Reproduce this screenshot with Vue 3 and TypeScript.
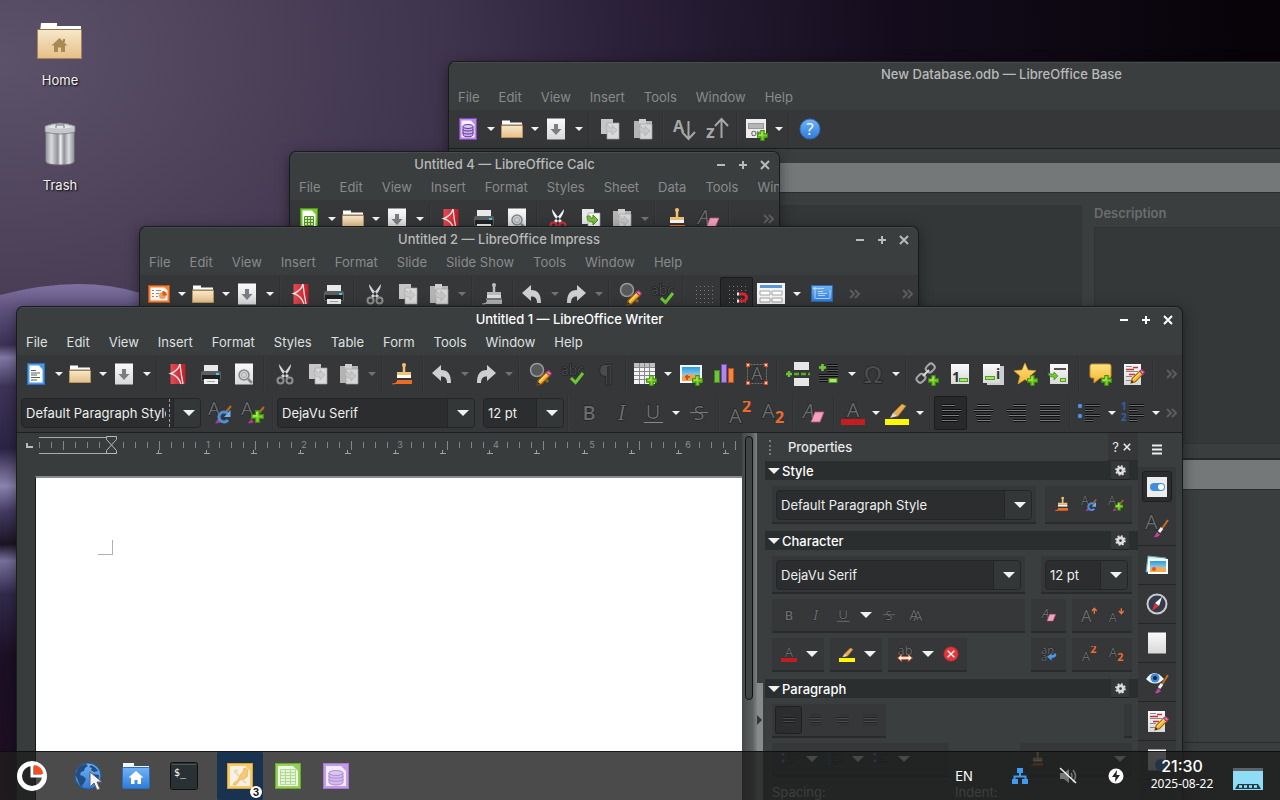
<script setup lang="ts">
interface Tool {
  kind: 'button' | 'menu' | 'sep' | 'more' | 'combo'
  icon: string
  off: boolean
  on: boolean
  size: string
}

interface AppWindow {
  id: string
  title: string
  menus: string[]
  tools: Tool[]
}

/* "|" separator, "*" drop-down, "~" disabled drop-down, "!" pressed, "@" combo box, ">" overflow */
function parse(spec: string): Tool[] {
  return spec.split(' ').map((token): Tool => {
    const last = token.slice(-1)
    const base = { off: false, on: false, size: '' }
    if (token === '|') return { ...base, kind: 'sep', icon: '' }
    if (token === '>') return { ...base, kind: 'more', icon: '' }
    if (token[0] === '@') return { ...base, kind: 'combo', icon: token.slice(1) }
    if (last === '*' || last === '~') {
      const icon = token.slice(0, -1)
      return { kind: 'menu', icon, off: last === '~', on: false, size: icon === 'display-views' ? 'wide' : '' }
    }
    if (last === '!') return { ...base, kind: 'button', icon: token.slice(0, -1), on: true }
    return { ...base, kind: 'button', icon: token }
  })
}

const windows: AppWindow[] = [
  {
    id: 'base',
    title: 'New Database.odb — LibreOffice Base',
    menus: ['File', 'Edit', 'View', 'Insert', 'Tools', 'Window', 'Help'],
    tools: parse('new-database* open* save* | copy paste | sort-ascending sort-descending | form* | help'),
  },
  {
    id: 'calc',
    title: 'Untitled 4 — LibreOffice Calc',
    menus: ['File', 'Edit', 'View', 'Insert', 'Format', 'Styles', 'Sheet', 'Data', 'Tools', 'Window'],
    tools: parse('new-spreadsheet* open* save* | export-pdf print preview | cut-red copy-green paste~ | clone clear | >'),
  },
  {
    id: 'impress',
    title: 'Untitled 2 — LibreOffice Impress',
    menus: ['File', 'Edit', 'View', 'Insert', 'Format', 'Slide', 'Slide Show', 'Tools', 'Window', 'Help'],
    tools: parse('new-slides* open* save* | export-pdf print | cut copy paste~ | clone-gray | undo~ redo~ | find spelling | grid snap! display-views* master-slide more >'),
  },
  {
    id: 'writer',
    title: 'Untitled 1 — LibreOffice Writer',
    menus: ['File', 'Edit', 'View', 'Insert', 'Format', 'Styles', 'Table', 'Form', 'Tools', 'Window', 'Help'],
    tools: parse('new-text* open* save* | export-pdf print preview | cut copy paste~ | clone | undo~ redo~ | find spelling pilcrow | table* image chart text-box | page-break field* omega* | link footnote endnote bookmark cross-reference | comment track | >'),
  },
]

const formatting = parse('@style style-update style-new | @font @points | bold italic underline* strike | superscript subscript | clear | font-color* highlight* | align-left! align-center align-right align-justify | bullets* numbering* >')

const combos: Record<string, string> = {
  style: 'Default Paragraph Style',
  font: 'DejaVu Serif',
  points: '12 pt',
}

const inch = 96
const origin = 74
const ticks = Array.from({ length: 60 }, (_, i) => i - 6)
  .filter((i) => i % 8 !== 0)
  .map((i) => ({ x: origin + i * 12, tall: i % 4 === 0 }))
const inches = Array.from({ length: 6 }, (_, i) => ({ n: i + 1, x: origin + (i + 1) * inch }))
const stops = Array.from({ length: 13 }, (_, i) => Math.round(origin + (i + 1) * 47.25))

const tabs = ['toggle', 'style-tab', 'gallery', 'compass', 'blank-page', 'eye', 'track', 'page-globe']
const launchers = ['globe', 'files', 'terminal']
const dots = Array.from({ length: 25 }, (_, i) => ({ x: 4 + (i % 5) * 4, y: 4 + Math.floor(i / 5) * 4 }))
</script>

<template>
  <div class="desktop">
    <svg class="paints" width="0" height="0" aria-hidden="true">
      <defs>
        <linearGradient id="g-folder" x1="0" y1="0" x2="0" y2="1"><stop offset="0" stop-color="#f6e8cc" /><stop offset="1" stop-color="#e6bf87" /></linearGradient>
        <linearGradient id="g-paper" x1="0" y1="0" x2="0" y2="1"><stop offset="0" stop-color="#fafafa" /><stop offset="1" stop-color="#d8d8d8" /></linearGradient>
        <linearGradient id="g-blue" x1="0" y1="0" x2="0" y2="1"><stop offset="0" stop-color="#71b3f5" /><stop offset="1" stop-color="#2f7bdb" /></linearGradient>
        <linearGradient id="g-red" x1="0" y1="0" x2="1" y2="0"><stop offset="0" stop-color="#e54c54" /><stop offset="1" stop-color="#bb1e2b" /></linearGradient>
        <linearGradient id="g-sky" x1="0" y1="0" x2="0" y2="1"><stop offset="0" stop-color="#2d9ce0" /><stop offset="1" stop-color="#c5ecf5" /></linearGradient>
        <linearGradient id="g-can" x1="0" y1="0" x2="1" y2="0"><stop offset="0" stop-color="#8c8e95" /><stop offset=".2" stop-color="#d9dade" /><stop offset=".42" stop-color="#8f9298" /><stop offset=".52" stop-color="#ededed" /><stop offset=".64" stop-color="#8d9097" /><stop offset=".8" stop-color="#dcdde0" /><stop offset="1" stop-color="#888b92" /></linearGradient>
        <linearGradient id="g-yellow" x1="0" y1="0" x2="0" y2="1"><stop offset="0" stop-color="#ffe383" /><stop offset="1" stop-color="#f3b52d" /></linearGradient>
      </defs>
    </svg>
    <svg class="sprite" aria-hidden="true">
      <symbol id="plus" viewBox="0 0 10 10"><path d="M3.5.5h3v3h3v3h-3v3h-3v-3h-3v-3h3z" fill="#7ed321" stroke="#3f8f10" /><path d="M4.500 1.500v3h-3" fill="none" stroke="#b8ee72" /></symbol>
      <symbol id="pencil" viewBox="0 0 14 14"><path d="M1 13l1-4 7-7 3 3-7 7z" fill="#f7b62c" stroke="#9a5e0a" /><path d="M3 10l7-7" stroke="#ffe07c" /><path d="M9 2l2-1.500 2.500 2.500L12 5z" fill="#f083b5" stroke="#a8386f" /><path d="M1 13l.8-2.500 1.700 1.700z" fill="#222" /></symbol>
      <symbol id="new-text" viewBox="0 0 24 24"><rect x="3.500" y="1.500" width="17" height="21" fill="#4c9bea" stroke="#2a6fc0" /><path d="M5.500 3.500h9.500l3.500 4v13h-13z" fill="#fff" /><path d="M7 8.500h5M7 11h9M7 13h6M7 15.500h9M7 18h6" stroke="#5a5f66" /></symbol>
      <symbol id="new-spreadsheet" viewBox="0 0 24 24"><rect x="3.500" y="1.500" width="17" height="21" fill="#7bcb2f" stroke="#4a951a" /><path d="M5.500 3.500h9.500l3.500 4v13h-13z" fill="#fff" /><path d="M7.500 9.500h9v9h-9zM7.500 12.500h9M7.500 15.500h9M10.500 9.500v9M13.500 9.500v9" fill="#d7f2b7" stroke="#56952a" /></symbol>
      <symbol id="new-database" viewBox="0 0 24 24"><rect x="3.500" y="1.500" width="17" height="21" fill="#b98be6" stroke="#7c4cb5" /><path d="M5.500 3.500h9.500l3.500 4v13h-13z" fill="#f6efff" /><path d="M7 9.500v8c0 3 10 3 10 0v-8" fill="#cdb2ec" stroke="#5d3494" /><path d="M7 12.500c0 2 10 2 10 0M7 15.500c0 2 10 2 10 0" fill="none" stroke="#5d3494" /><ellipse cx="12" cy="9.500" rx="5" ry="2" fill="#ddc9f4" stroke="#5d3494" /></symbol>
      <symbol id="new-slides" viewBox="0 0 24 24"><rect x="1.500" y="3.500" width="21" height="17" fill="#f28438" stroke="#c2541a" /><path d="M3.500 5.500h14l3 3v10h-17z" fill="#fff8f2" /><path d="M5 8.500h2M9 8.500h5M5 11.500h2M9 11.500h3M5 14.500h2M9 14.500h2" stroke="#8c8c8c" /><circle cx="15.500" cy="13.500" r="3.500" fill="#f2a06a" /><path d="M15.500 13.500v-4.500a4.500 4.500 0 0 1 4.500 4.500z" fill="#d85c1a" /></symbol>
      <symbol id="open" viewBox="0 0 24 24"><path d="M2 3.500h8v2h12v5H2z" fill="#fff" /><path d="M1.500 8.500h21v12h-21z" fill="url(#g-folder)" stroke="#b99561" /><path d="M1 8h22" stroke="#8b734f" /></symbol>
      <symbol id="save" viewBox="0 0 24 24"><rect x="3" y="1.500" width="18" height="21" fill="url(#g-paper)" /><path d="M10 7h4v5h3.500L12 18l-5.500-6H10z" fill="#7b7e82" /></symbol>
      <symbol id="export-pdf" viewBox="0 0 24 24"><rect x="4.500" y="2" width="15" height="20" fill="url(#g-red)" /><path d="M14 2Q12 9 4.500 11.500Q12 13.500 15 22M14 2Q15 12 17 22" fill="none" stroke="#fbe3e3" stroke-width="1.300" /></symbol>
      <symbol id="print" viewBox="0 0 24 24"><path d="M5 3h14v7H5z" fill="#e9e9e9" /><rect x="2" y="9" width="20" height="10" rx="2" fill="#5b5f62" /><path d="M3 13h18v5H3z" fill="#222" /><rect x="17" y="11" width="3" height="2" fill="#35d0e6" /><path d="M5 17h14v5H5z" fill="#f1f1f1" /><path d="M8 19.500h8" stroke="#a9a9a9" /></symbol>
      <symbol id="preview" viewBox="0 0 24 24"><rect x="3" y="1.500" width="18" height="21" fill="url(#g-paper)" /><circle cx="12" cy="13" r="5" fill="#cfd3d6" stroke="#83878b" stroke-width="1.500" /><circle cx="12" cy="13" r="2.500" fill="none" stroke="#a7abae" /><path d="M16 17l4 4" stroke="#83878b" stroke-width="2.500" /></symbol>
      <symbol id="cut" viewBox="0 0 24 24"><path d="M6 2c0 5 3 9 8 14l2-2C11 9 9 6 6 2zM18 2c0 5-3 9-8 14l-2-2c5-5 7-8 10-12z" fill="#d6d6d6" /><circle cx="7.500" cy="18.500" r="3" fill="none" stroke="#8e8e8e" stroke-width="2" /><circle cx="16.500" cy="18.500" r="3" fill="none" stroke="#8e8e8e" stroke-width="2" /></symbol>
      <symbol id="cut-red" viewBox="0 0 24 24"><path d="M6 2c0 5 3 9 8 14l2-2C11 9 9 6 6 2zM18 2c0 5-3 9-8 14l-2-2c5-5 7-8 10-12z" fill="#f4f4f4" /><circle cx="7.500" cy="18.500" r="3" fill="none" stroke="#d5303a" stroke-width="2" /><circle cx="16.500" cy="18.500" r="3" fill="none" stroke="#d5303a" stroke-width="2" /></symbol>
      <symbol id="copy" viewBox="0 0 24 24"><path d="M3 2h12v15H3z" fill="#c6c6c6" /><path d="M9 6h12v16H9z" fill="#dadada" stroke="#a2a2a2" stroke-width=".7" /><path d="M8 9c0 5 2 6 6 6v3l5-5-5-5v3c-2 0-3 0-3-2z" fill="#cbcbcb" stroke="#b0b0b0" stroke-width=".7" /></symbol>
      <symbol id="copy-green" viewBox="0 0 24 24"><path d="M3 2h12v15H3z" fill="#e9e9e9" /><path d="M9 6h12v16H9z" fill="#f6f6f6" stroke="#a2a2a2" stroke-width=".7" /><path d="M8 9c0 5 2 6 6 6v3l5-5-5-5v3c-2 0-3 0-3-2z" fill="#7cc53c" stroke="#4b8e1d" /></symbol>
      <symbol id="paste" viewBox="0 0 24 24"><path d="M3 4h18v17H3z" fill="#b4b4b4" /><path d="M8 2h7v5H8z" fill="#cecece" /><path d="M9 7h12v15H9z" fill="#d5d5d5" stroke="#a5a5a5" stroke-width=".7" /><path d="M8 10c0 5 2 6 6 6v3l5-5-5-5v3c-2 0-3 0-3-2z" fill="#c6c6c6" stroke="#adadad" stroke-width=".7" /></symbol>
      <symbol id="clone" viewBox="0 0 24 24"><path d="M13 3v8" stroke="#f1c271" stroke-width="2.500" /><circle cx="13" cy="3" r="2" fill="#f1c271" /><path d="M6 10h14v3H6z" fill="#f1c271" /><path d="M6 13h14v3H6z" fill="#fff" /><path d="M5 16h16v2.500H5z" fill="#363636" /><path d="M6 18h15v4H5q-4 1-4-.5 5 0 5-3.500z" fill="#ed6b24" /></symbol>
      <symbol id="clone-gray" viewBox="0 0 24 24"><path d="M13 3v8" stroke="#bdbdbd" stroke-width="2.500" /><circle cx="13" cy="3" r="2" fill="#bdbdbd" /><path d="M6 10h14v3H6z" fill="#b9b9b9" /><path d="M6 13h14v3H6z" fill="#ddd" /><path d="M5 16h16v2.500H5z" fill="#777" /><path d="M6 18h15v4H5q-4 1-4-.5 5 0 5-3.500z" fill="#b0b0b0" /></symbol>
      <symbol id="undo" viewBox="0 0 24 24"><path d="M2 11l9-8v5c7 0 10 4 10 13h-4c0-5-2-6.500-6-6.500V19z" fill="#cfcfcf" /></symbol>
      <symbol id="redo" viewBox="0 0 24 24"><path d="M22 11l-9-8v5C6 8 3 12 3 21h4c0-5 2-6.500 6-6.500V19z" fill="#cfcfcf" /></symbol>
      <symbol id="find" viewBox="0 0 24 24"><circle cx="9" cy="8" r="6.500" fill="#57595b" stroke="#969a9c" stroke-width="1.500" /><path d="M14 13l6 7" stroke="#80603e" stroke-width="3" /><use href="#pencil" x="8" y="8" width="16" height="16" /></symbol>
      <symbol id="spelling" viewBox="0 0 24 24"><text class="glyph dark" x="0" y="13" font-size="14">abc</text><path d="M10 16l4.500 4.500L22 11" fill="none" stroke="#6bc832" stroke-width="3" /></symbol>
      <symbol id="pilcrow" viewBox="0 0 24 24"><text class="glyph dark" x="12" y="19" text-anchor="middle" font-size="22">¶</text></symbol>
      <symbol id="table" viewBox="0 0 24 24"><rect x="1" y="1" width="21" height="21" fill="#f3f3f3" /><path d="M1 1h21v4H1z" fill="#c0c0c0" /><path d="M1 5.500h21M1 9.500h21M1 13.500h21M1 17.500h21M6.500 1v21M11.500 1v21M16.500 1v21" stroke="#888" /><use href="#plus" x="13" y="13" width="11" height="11" /></symbol>
      <symbol id="image" viewBox="0 0 24 24"><rect x="1" y="3" width="22" height="18" fill="#f7f7f7" /><rect x="3" y="5" width="18" height="14" fill="url(#g-sky)" /><path d="M3 14q8-4 18 0v5H3z" fill="#e8a457" /><path d="M8 13v5M6 15h5" stroke="#d6501f" stroke-width="2" /><use href="#plus" x="13" y="13" width="11" height="11" /></symbol>
      <symbol id="chart" viewBox="0 0 24 24"><rect x="2.500" y="8.500" width="5" height="12" fill="#72c236" stroke="#3c8a16" /><rect x="9.500" y="2.500" width="5" height="18" fill="#b285ee" stroke="#7549b5" /><rect x="16.500" y="6.500" width="5" height="14" fill="#f58443" stroke="#bd4c14" /></symbol>
      <symbol id="text-box" viewBox="0 0 24 24"><rect x="2.500" y="2.500" width="19" height="19" fill="none" stroke="#707273" stroke-dasharray="2 1" /><text class="glyph" x="12" y="18" text-anchor="middle" font-size="18">A</text><path d="M1 1h4v4H1zM19 1h4v4h-4zM1 19h4v4H1zM19 19h4v4h-4z" fill="#dd4c22" /><path d="M2 2h2v2H2zM20 2h2v2h-2zM2 20h2v2H2zM20 20h2v2h-2z" fill="#ffd0b5" /></symbol>
      <symbol id="page-break" viewBox="0 0 24 24"><path d="M8 0h15v8H8zM8 16h15v8H8z" fill="#e6e6e6" /><path d="M8 12h16" stroke="#5daa26" stroke-width="2.500" stroke-dasharray="5 2" /><path d="M0 12h6M3 9v6" stroke="#6cc22d" stroke-width="2.500" /></symbol>
      <symbol id="field" viewBox="0 0 24 24"><path d="M10 3.500h11M10 8.500h11M2 13.500h19M2 18.500h9" stroke="#0e0f0f" stroke-width="3" /><path d="M10 3.500h11M10 8.500h11M2 13.500h19M2 18.500h9" stroke="#5e6061" /><rect x="12" y="16.500" width="8" height="4" fill="#a9ec69" stroke="#509a1c" /><path d="M2 5.500h7M5.500 2v7" stroke="#75cb35" stroke-width="2.500" /></symbol>
      <symbol id="omega" viewBox="0 0 24 24"><text class="glyph dark" x="12" y="21" text-anchor="middle" font-size="24" font-weight="600">Ω</text></symbol>
      <symbol id="link" viewBox="0 0 24 24"><g fill="none" stroke="#a6a8a9" stroke-width="2"><rect x="12" y="2" width="7" height="9" rx="3" transform="rotate(45 16 6)" /><rect x="2" y="12" width="7" height="9" rx="3" transform="rotate(45 6 17)" /><path d="M8 14l6-6" stroke="#d9d9d9" /></g><use href="#plus" x="13" y="13" width="11" height="11" /></symbol>
      <symbol id="footnote" viewBox="0 0 24 24"><rect x="3" y="2" width="18" height="20" fill="url(#g-paper)" /><text x="4" y="20" font-family="Open Sans, sans-serif" font-weight="700" font-size="14" fill="#303233">1</text><rect x="11.500" y="16.500" width="8" height="3" fill="#a4e66a" stroke="#579b28" /></symbol>
      <symbol id="endnote" viewBox="0 0 24 24"><rect x="6" y="4" width="17" height="19" fill="#cdcdcd" /><rect x="2" y="2" width="17" height="19" fill="url(#g-paper)" /><rect x="4.500" y="14.500" width="9" height="3" fill="#a4e66a" stroke="#579b28" /><text x="15" y="17" font-family="Open Sans, sans-serif" font-weight="700" font-size="14" fill="#303233">i</text></symbol>
      <symbol id="bookmark" viewBox="0 0 24 24"><path d="M11 1l3 7 8 .8-6 5.200 2 8-7-4.500L4 22l2-8L0 8.800 8 8z" fill="url(#g-yellow)" stroke="#d89b28" stroke-width=".7" /><use href="#plus" x="13" y="13" width="11" height="11" /></symbol>
      <symbol id="cross-reference" viewBox="0 0 24 24"><rect x="3" y="2" width="18" height="20" fill="url(#g-paper)" /><path d="M7 7h12" stroke="#5d4e4b" stroke-width="2" /><path d="M1 11c1 4 3 4 6 4v3l4-4-4-4v2H4z" fill="#74c634" stroke="#408b16" stroke-width=".7" /><rect x="13.500" y="16.500" width="5" height="3" fill="#a4e66a" stroke="#579b28" /></symbol>
      <symbol id="comment" viewBox="0 0 24 24"><path d="M4 2h17q2 0 2 2v10q0 2-2 2h-9l-6 5v-5H4q-2 0-2-2V4q0-2 2-2z" fill="url(#g-yellow)" stroke="#c78f22" /><use href="#plus" x="13" y="13" width="11" height="11" /></symbol>
      <symbol id="track" viewBox="0 0 24 24"><rect x="3" y="2" width="17" height="21" fill="url(#g-paper)" /><path d="M5 4.500h6M5 9.500h12M5 14.500h6M5 18.500h5" stroke="#888" /><path d="M12 5.500h5M5 7.500h8M8 12.500h6" stroke="#cf3037" stroke-width="1.500" /><use href="#pencil" x="9" y="7" width="15" height="15" /></symbol>
      <symbol id="style-update" viewBox="0 0 24 24"><text class="glyph" x="0" y="14" font-size="19">A</text><path d="M18 11l5-6" stroke="#bf6a1e" stroke-width="2" /><path d="M7 22l3-4 3 3q-3 2-6 1z" fill="#b8329d" /><path d="M19.500 12.500A5 5 0 1 0 20 19" fill="none" stroke="#4b8fdc" stroke-width="3" /><path d="M22.500 9v7H16z" fill="#70b0f3" /></symbol>
      <symbol id="style-new" viewBox="0 0 24 24"><text class="glyph" x="0" y="14" font-size="19">A</text><path d="M18 12l5-6" stroke="#bf6a1e" stroke-width="2" /><path d="M7 22l3-4 3 3q-3 2-6 1z" fill="#b8329d" /><use href="#plus" x="10" y="9" width="13" height="13" /></symbol>
      <symbol id="bold" viewBox="0 0 24 24"><text class="glyph" x="12" y="19" text-anchor="middle" font-size="20" font-weight="600">B</text></symbol>
      <symbol id="italic" viewBox="0 0 24 24"><text class="glyph slab" x="12" y="19" text-anchor="middle" font-size="20" font-style="italic">I</text></symbol>
      <symbol id="underline" viewBox="0 0 24 24"><text class="glyph" x="12" y="18" text-anchor="middle" font-size="20">U</text><path d="M3 21.500h19" stroke="#85878a" /></symbol>
      <symbol id="strike" viewBox="0 0 24 24"><text class="glyph" x="12" y="19" text-anchor="middle" font-size="20">S</text><path d="M3 11.500h18" stroke="#77797a" /></symbol>
      <symbol id="superscript" viewBox="0 0 24 24"><text class="glyph" x="1" y="22" font-size="20">A</text><text x="14" y="11" font-family="Open Sans, sans-serif" font-weight="700" font-size="16" fill="#ed6c2b">2</text></symbol>
      <symbol id="subscript" viewBox="0 0 24 24"><text class="glyph" x="1" y="17" font-size="20">A</text><text x="14" y="22" font-family="Open Sans, sans-serif" font-weight="700" font-size="16" fill="#ed6c2b">2</text></symbol>
      <symbol id="clear" viewBox="0 0 24 24"><text class="glyph" x="1" y="17" font-size="20" font-style="italic">A</text><path d="M13 11h9l-4 10H9z" fill="#f3a0b9" stroke="#b6577b" stroke-width=".8" /></symbol>
      <symbol id="font-color" viewBox="0 0 24 24"><text class="glyph" x="12" y="16" text-anchor="middle" font-size="20">A</text><path d="M0 18h24v6H0z" fill="#c41c1f" /></symbol>
      <symbol id="highlight" viewBox="0 0 24 24"><path d="M8 12l9-9 4 2-8 10-5 1z" fill="#e8b04e" stroke="#a9721f" stroke-width=".7" /><path d="M5 17l3-5 4 3z" fill="#dadada" /><path d="M0 18h24v6H0z" fill="#fdf800" /></symbol>
      <symbol id="align-left" viewBox="0 0 24 24"><path d="M3 4.500h13M3 9.500h19M3 14.500h17M3 19.500h15" stroke="#0c0d0d" stroke-width="3" /><path d="M3 4.500h13M3 9.500h19M3 14.500h17M3 19.500h15" stroke="#7a7c7d" /></symbol>
      <symbol id="align-center" viewBox="0 0 24 24"><path d="M5 4.500h13M2 9.500h19M4 14.500h15M5 19.500h14" stroke="#101111" stroke-width="3" /><path d="M5 4.500h13M2 9.500h19M4 14.500h15M5 19.500h14" stroke="#7a7c7d" /></symbol>
      <symbol id="align-right" viewBox="0 0 24 24"><path d="M8 4.500h13M2 9.500h19M4 14.500h17M8 19.500h13" stroke="#101111" stroke-width="3" /><path d="M8 4.500h13M2 9.500h19M4 14.500h17M8 19.500h13" stroke="#7a7c7d" /></symbol>
      <symbol id="align-justify" viewBox="0 0 24 24"><path d="M2 4.500h20M2 9.500h20M2 14.500h20M2 19.500h20" stroke="#101111" stroke-width="3" /><path d="M2 4.500h20M2 9.500h20M2 14.500h20M2 19.500h20" stroke="#7a7c7d" /></symbol>
      <symbol id="bullets" viewBox="0 0 24 24"><path d="M8 4.500h15M8 9.500h8M8 14.500h15M8 19.500h8" stroke="#101111" stroke-width="3" /><path d="M8 4.500h15M8 9.500h8M8 14.500h15M8 19.500h8" stroke="#6c6e6f" /><circle cx="3" cy="5" r="2.200" fill="#4f90e4" /><circle cx="3" cy="15" r="2.200" fill="#4f90e4" /></symbol>
      <symbol id="numbering" viewBox="0 0 24 24"><path d="M8 4.500h15M8 9.500h8M8 14.500h15M8 19.500h8" stroke="#101111" stroke-width="3" /><path d="M8 4.500h15M8 9.500h8M8 14.500h15M8 19.500h8" stroke="#6c6e6f" /><text x="0" y="9" font-family="Open Sans, sans-serif" font-weight="700" font-size="10" fill="#345fa6">1</text><text x="0" y="20" font-family="Open Sans, sans-serif" font-weight="700" font-size="10" fill="#345fa6">2</text></symbol>
      <symbol id="grid" viewBox="0 0 24 24"><rect v-for="(d, i) in dots" :key="i" :x="d.x" :y="d.y" width="1" height="1" fill="#77797a" /></symbol>
      <symbol id="snap" viewBox="0 0 24 24"><rect v-for="(d, i) in dots" :key="i" :x="d.x" :y="d.y" width="1" height="1" fill="#77797a" /><path d="M14 12h4a3.500 3.500 0 0 1 0 7h-4" fill="none" stroke="#d8252e" stroke-width="3" /><path d="M13 10.500v3M13 17.500v3" stroke="#eee" stroke-width="2" /></symbol>
      <symbol id="display-views" viewBox="0 0 30 24"><rect x="1" y="1" width="28" height="21" fill="#f4f4f4" /><path d="M4 4.500h22" stroke="#5c95d8" stroke-width="3" /><path d="M4 9h10v4H4zM16 9h10v4H16zM4 16h10v4H4zM16 16h10v4H16z" fill="#fff" stroke="#a2a2a2" /></symbol>
      <symbol id="master-slide" viewBox="0 0 24 24"><rect x="1.500" y="3.500" width="21" height="16" fill="url(#g-blue)" stroke="#2a68b5" /><path d="M5 5v12M3 6.500h11M20 16v-8M6 16.500h14M8 9.500h5M8 11.500h9M8 13.500h7" stroke="#cde6ff" stroke-width=".8" fill="none" /></symbol>
      <symbol id="sort-ascending" viewBox="0 0 24 24"><text x="1" y="15" font-family="Open Sans, sans-serif" font-weight="700" font-size="16" fill="#a5a7a8">A</text><path d="M16.500 4v17M10 15l6.500 7 6.500-7" fill="none" stroke="#a5a7a8" stroke-width="2" /></symbol>
      <symbol id="sort-descending" viewBox="0 0 24 24"><text x="1" y="21" font-family="Open Sans, sans-serif" font-weight="700" font-size="18" fill="#a5a7a8">z</text><path d="M16.500 21V3M10 9l6.500-7L23 9" fill="none" stroke="#a5a7a8" stroke-width="2" /></symbol>
      <symbol id="form" viewBox="0 0 24 24"><rect x="2" y="2" width="20" height="19" fill="#ededed" /><rect x="4.500" y="6.500" width="15" height="5" fill="#b5b5b5" stroke="#999" /><text x="7" y="19" font-family="DejaVu Sans, sans-serif" font-size="7" fill="#333">OK</text><use href="#plus" x="13" y="13" width="11" height="11" /></symbol>
      <symbol id="help" viewBox="0 0 24 24"><circle cx="12" cy="12" r="10" fill="url(#g-blue)" stroke="#2e6fc6" /><text x="12" y="18" text-anchor="middle" font-family="Open Sans, sans-serif" font-size="17" fill="#fff">?</text></symbol>
      <symbol id="more" viewBox="0 0 24 24"><path d="M7 8l4 4-4 4M12 8l4 4-4 4" fill="none" stroke="#5b5d5e" stroke-width="2" /></symbol>
      <symbol id="shadow" viewBox="0 0 24 24"><text class="glyph" x="8" y="21" font-size="22">A</text><text class="glyph" x="2" y="19" font-size="22">A</text></symbol>
      <symbol id="grow" viewBox="0 0 24 24"><text class="glyph" x="0" y="22" font-size="25">A</text><path d="M20 10V2M16.500 6L20 2l3.500 4" fill="none" stroke="#f07340" stroke-width="2" /></symbol>
      <symbol id="shrink" viewBox="0 0 24 24"><text class="glyph" x="1" y="22" font-size="19">A</text><path d="M20 2v8M16.500 6l3.500 4 3.500-4" fill="none" stroke="#f07340" stroke-width="2" /></symbol>
      <symbol id="spacing" viewBox="0 0 24 24"><text class="glyph" x="12" y="14" text-anchor="middle" font-size="19">ab</text><path d="M1 18l6-5v3h10v-3l6 5-6 5v-3H7v3z" fill="#fff" stroke="#e45d25" stroke-width="1.500" /></symbol>
      <symbol id="reset" viewBox="0 0 24 24"><circle cx="12" cy="12" r="11" fill="#e0383f" stroke="#ac1c26" /><path d="M7 7l10 10M17 7L7 17" stroke="#fff" stroke-width="2" /></symbol>
      <symbol id="text-wrap" viewBox="0 0 24 24"><text class="glyph" x="0" y="12" font-size="17">an</text><text class="glyph" x="0" y="23" font-size="17">a</text><path d="M23 12q0 6-7 6v4l-7-6 7-5v3q3 0 5-3z" fill="#4c96ea" /></symbol>
      <symbol id="gear" viewBox="0 0 16 16"><circle cx="8" cy="8" r="4" fill="none" stroke="#dedede" stroke-width="4" /><circle cx="8" cy="8" r="6.500" fill="none" stroke="#dedede" stroke-width="2.500" stroke-dasharray="2.600 2.500" /></symbol>
      <symbol id="toggle" viewBox="0 0 24 24"><rect x="2" y="2" width="20" height="20" fill="#ededed" /><rect x="5" y="8" width="15" height="8" rx="4" fill="#3d8edb" /><circle cx="16" cy="12" r="3" fill="#fff" /></symbol>
      <symbol id="style-tab" viewBox="0 0 24 24"><text class="glyph" x="0" y="15" font-size="20">A</text><path d="M16 16l7-10" stroke="#cc6b21" stroke-width="2" /><path d="M14 18l3-4" stroke="#f0f0f0" stroke-width="3" /><path d="M9 23l3-5 3 3q-3 3-6 2z" fill="#c9409b" /></symbol>
      <symbol id="gallery" viewBox="0 0 24 24"><path d="M3 3l18 2v14H1z" fill="#d9f0f8" stroke="#5a9cab" /><rect x="3" y="6" width="20" height="15" fill="#fff" /><rect x="5" y="8" width="16" height="11" fill="url(#g-sky)" /><path d="M5 15q8-3 16 0v4H5z" fill="#efac52" /><circle cx="9" cy="16" r="2" fill="#e2551f" /></symbol>
      <symbol id="compass" viewBox="0 0 24 24"><circle cx="12" cy="12" r="9.500" fill="#343b4c" stroke="#c9cbcc" stroke-width="2" /><path d="M17 5l-3 9-4-3z" fill="#fff" /><path d="M7 19l3-8 4 3z" fill="#dd3338" /></symbol>
      <symbol id="blank-page" viewBox="0 0 24 24"><rect x="3" y="1.500" width="18" height="21" fill="url(#g-paper)" /></symbol>
      <symbol id="eye" viewBox="0 0 24 24"><path d="M1 9q8-12 18 0-9 9-18 0z" fill="#f3f6f8" /><circle cx="10" cy="8" r="4.500" fill="#3b8ad8" /><circle cx="10" cy="8" r="2" fill="#10233a" /><path d="M16 16l7-11" stroke="#cc6b21" stroke-width="2" /><path d="M14 18l3-4" stroke="#f0f0f0" stroke-width="3" /><path d="M10 23l3-5 3 3q-3 3-6 2z" fill="#c9409b" /></symbol>
      <symbol id="page-globe" viewBox="0 0 24 24"><rect x="3" y="1.500" width="18" height="21" fill="url(#g-paper)" /><circle cx="16" cy="17" r="6" fill="#3c87d8" /></symbol>
      <symbol id="home-folder" viewBox="0 0 48 40"><path d="M5 2h16v3h24v6H4z" fill="#fff" /><path d="M1.500 8.500h44v29h-44z" fill="url(#g-folder)" stroke="#a88450" /><path d="M1 8.500h45" stroke="#8e734b" /><path d="M23.500 17l8 7.500h-2.500V31h-4v-4.500h-3V31h-4v-6.500h-2.500z" fill="#a98a55" /><path d="M27 18h2v3h-2z" fill="#a98a55" /></symbol>
      <symbol id="trash-can" viewBox="0 0 32 44"><path d="M1.500 8v31q0 4 14.500 4t14.500-4V8z" fill="url(#g-can)" stroke="#676971" /><path d="M1 4q15-6 30 0v6q-15 4-30 0z" fill="#c5c7ca" stroke="#75777c" stroke-width=".8" /><path d="M3 5q13-5 26 0-13 3-26 0z" fill="#e6e7e9" /><path d="M12 6V3h8v3" fill="none" stroke="#77797c" /></symbol>
      <symbol id="globe" viewBox="0 0 30 30"><circle cx="15" cy="15" r="13" fill="url(#g-blue)" stroke="#225ba5" /><path d="M5 7q4-4 8-4l2 2-3 2-1 3-3 1-1 3 3 1 3 3-2 4-2 3-1 1-2-4-2-5-2-3zM18 4q5 2 7 6l-4 1-3-2 1-2-3-1zM20 13l6 1q0 5-3 8l-3-3-2-3z" fill="#234f80" /></symbol>
      <symbol id="files" viewBox="0 0 30 30"><path d="M2 2h11v3h15v5H2z" fill="#f4f7fa" /><rect x="1.500" y="6.500" width="27" height="21" rx="1" fill="url(#g-blue)" stroke="#2d6cbd" /><path d="M15 10l7.500 6.500h-2.500V23h-3.500v-4h-3v4H10v-6.500H7.500z" fill="#fff" /></symbol>
      <symbol id="terminal" viewBox="0 0 30 30"><rect x="1.500" y="1.500" width="27" height="27" rx="2" fill="#293134" stroke="#101314" /><path d="M3 3.500h24" stroke="#4f5759" /><text x="5" y="15" font-family="DejaVu Sans Mono, monospace" font-size="10" fill="#fff">$_</text></symbol>
      <symbol id="launcher" viewBox="0 0 32 32"><circle cx="16" cy="16" r="12.500" fill="none" stroke="#fff" stroke-width="5" /><path d="M16 2v14h14" fill="none" stroke="#fff" stroke-width="3" /><path d="M18 5a9 9 0 0 1 9 9h-9z" fill="#fa4b1e" /></symbol>
      <symbol id="draw-app" viewBox="0 0 30 30"><rect x="2.500" y="2.500" width="25" height="25" fill="#f5cb62" stroke="#d3a23a" /><path d="M5 5h15l5 5v15H5z" fill="#f8f0e2" /><path d="M9 10l12 12M10 9l3 1" fill="none" stroke="#ecd3a0" stroke-width="1.500" /><path d="M19 7q4 0 4 4l-1 5q-2 2-5 2l-2 1-4 5-3 0q0-3 4-4l3-5q1-3 3-4z" fill="#f6ca72" stroke="#e2b35c" stroke-width=".7" /></symbol>
      <symbol id="calc-app" viewBox="0 0 30 30"><rect x="2.500" y="2.500" width="25" height="25" fill="#92d153" stroke="#68a92f" /><path d="M5 5h15l5 5v15H5z" fill="#f0f5ea" /><path d="M7.500 8.500h15v15h-15zM7.500 11.500h15M7.500 14.500h15M7.500 17.500h15M7.500 20.500h15M12.500 8.500v15M17.500 8.500v15" fill="#e6f3d8" stroke="#b3d892" /></symbol>
      <symbol id="base-app" viewBox="0 0 30 30"><rect x="2.500" y="2.500" width="25" height="25" fill="#c29cea" stroke="#a47bd0" /><path d="M5 5h15l5 5v15H5z" fill="#f0ebf6" /><path d="M8 12v9c0 4 14 4 14 0v-9" fill="#d3bbee" stroke="#b08bd9" /><path d="M8 15c0 3 14 3 14 0M8 18c0 3 14 3 14 0" fill="none" stroke="#b08bd9" /><ellipse cx="15" cy="12" rx="7" ry="2.500" fill="#dcc5f5" stroke="#b08bd9" /></symbol>
      <symbol id="network" viewBox="0 0 18 18"><path d="M6 1h6v5H6zM1 12h6v5H1zM11 12h6v5h-6z" fill="#3f9cf1" /><path d="M9 6v3.500M3.500 12V9.500h11V12" stroke="#3f9cf1" stroke-width="2" fill="none" /></symbol>
      <symbol id="muted" viewBox="0 0 18 18"><path d="M1 6h4l5-4v14l-5-4H1z" fill="#767676" /><path d="M12 6q2 3 0 6M14 3q5 6 0 12" fill="none" stroke="#767676" stroke-width="1.500" /><path d="M1 1l16 15" stroke="#f2f2f2" stroke-width="1.500" /></symbol>
      <symbol id="power" viewBox="0 0 18 18"><circle cx="9" cy="9" r="7.500" fill="#fff" /><path d="M10 3L5 10h3.500L8 15l5-7H9.500z" fill="#222" /></symbol>
      <symbol id="show-desktop" viewBox="0 0 30 24"><path d="M0 1h30v3H0z" fill="#5d6468" /><path d="M0 4h30v19H0z" fill="#8fdcf6" /><path d="M2 22l3-5h20l3 5z" fill="#223f49" /><path d="M6 19.500h18" stroke="#9ce3f8" stroke-width="2.500" stroke-dasharray="3 2" /></symbol>
    </svg>

    <svg class="wallpaper" viewBox="0 0 1280 800" preserveAspectRatio="none" aria-hidden="true">
      <defs>
        <linearGradient id="w-wave" gradientUnits="userSpaceOnUse" x1="0" y1="285" x2="0" y2="345"><stop offset="0" stop-color="#7d709f" /><stop offset=".4" stop-color="#5e527d" /><stop offset="1" stop-color="#3a3154" /></linearGradient>
        <linearGradient id="w-fold" gradientUnits="userSpaceOnUse" x1="0" y1="345" x2="5" y2="760">
          <stop offset="0" stop-color="#3a3154" /><stop offset=".03" stop-color="#8279a5" /><stop offset=".1" stop-color="#3d3458" /><stop offset=".25" stop-color="#2c2444" />
          <stop offset=".34" stop-color="#8b84b0" /><stop offset=".4" stop-color="#453d63" /><stop offset=".48" stop-color="#1b1424" /><stop offset=".52" stop-color="#77709b" />
          <stop offset=".6" stop-color="#332b4c" /><stop offset=".75" stop-color="#1c1026" /><stop offset="1" stop-color="#1f0e22" />
        </linearGradient>
      </defs>
      <path d="M0 295Q80 274 140 293L300 320V350H0z" fill="url(#w-wave)" />
      <path d="M0 345h20v455H0z" fill="url(#w-fold)" />
    </svg>

    <nav class="shortcuts" aria-label="Desktop">
      <a class="shortcut" href="#home"><svg class="pic home"><use href="#home-folder" /></svg>Home</a>
      <a class="shortcut" href="#trash"><svg class="pic can"><use href="#trash-can" /></svg>Trash</a>
    </nav>

    <section v-for="w in windows" :key="w.id" class="window" :class="w.id" :aria-label="w.title">
      <header class="titlebar">
        <h2 class="title">{{ w.title }}</h2>
        <button class="control" aria-label="Minimize"><svg viewBox="0 0 10 10"><path d="M1 5h8" /></svg></button>
        <button class="control" aria-label="Maximize"><svg viewBox="0 0 10 10"><path d="M1 5h8M5 1v8" /></svg></button>
        <button class="control" aria-label="Close"><svg viewBox="0 0 10 10"><path d="M1 1l8 8M9 1L1 9" /></svg></button>
      </header>
      <nav class="menubar"><button v-for="m in w.menus" :key="m">{{ m }}</button></nav>

      <div class="bars">
        <div v-for="(bar, b) in w.id === 'writer' ? [w.tools, formatting] : [w.tools]" :key="b" class="toolbar" :class="{ second: b === 1 }">
          <template v-for="(t, i) in bar" :key="i">
            <span v-if="t.kind === 'sep'" class="sep"></span>
            <button v-else-if="t.kind === 'more'" class="tool overflow" aria-label="More"><svg><use href="#more" /></svg></button>
            <span v-else-if="t.kind === 'combo'" class="combo" :class="t.icon">
              <input type="text" :value="combos[t.icon]" :aria-label="t.icon" />
              <button :aria-label="t.icon + ' list'"><i class="arrow big"></i></button>
            </span>
            <button v-else-if="t.kind === 'button'" class="tool" :class="{ on: t.on }" :aria-label="t.icon"><svg><use :href="'#' + t.icon" /></svg></button>
            <button v-else class="tool split" :class="[t.size, { off: t.off }]" :aria-label="t.icon"><svg><use :href="'#' + t.icon" /></svg><i class="arrow"></i></button>
          </template>
        </div>
      </div>

      <div v-if="w.id === 'base'" class="base-body">
        <div class="band"></div>
        <div class="panes">
          <div class="tasks"></div>
          <div class="description"><h3>Description</h3><div class="description-box"></div></div>
        </div>
        <div class="band"></div>
        <div class="objects"></div>
      </div>

      <div v-if="w.id === 'writer'" class="writer-body">
        <div class="editor">
          <div class="ruler">
            <span class="corner"></span>
            <svg class="scale" height="24" aria-hidden="true">
              <path d="M1 4.500h68M1 20.500h68" stroke="#a9abab" fill="none" />
              <path v-for="t in ticks" :key="t.x" :d="t.tall ? `M${t.x - .5} 8v9` : `M${t.x - .5} 9v6`" stroke="#858787" />
              <text v-for="n in inches" :key="n.n" :x="n.x" y="15" text-anchor="middle">{{ n.n }}</text>
              <path v-for="s in stops" :key="'s' + s" :d="`M${s - 3} 20.500h6M${s - .5} 17v4`" stroke="#a0a2a2" />
              <path d="M68.500 3.500h10v3l-10 11v3h10v-3l-10-11z" fill="#3b3e3f" stroke="#b7b9b9" />
            </svg>
          </div>
          <div class="paper" role="textbox" aria-label="Document"><span class="margin-mark"></span></div>
        </div>
        <div class="scrollbar"><div class="thumb"></div></div>
        <div class="sash"><span class="sash-grip"></span></div>
        <aside class="deck">
          <header class="deck-head">
            <span class="grip"></span>
            <h3>Properties</h3>
            <div class="deck-buttons">
              <button aria-label="Help">?</button>
              <button aria-label="Close sidebar"><svg class="x" viewBox="0 0 10 10"><path d="M1 1l8 8M9 1L1 9" /></svg></button>
            </div>
          </header>
          <h4 class="section"><i class="arrow big"></i>Style<button aria-label="Style options"><svg><use href="#gear" /></svg></button></h4>
          <div class="rows">
            <div class="row">
              <div class="box grow field"><span class="combo"><input type="text" value="Default Paragraph Style" aria-label="Paragraph style" /><button aria-label="Styles"><i class="arrow big"></i></button></span></div>
              <div class="box tall gap-wide icons"><button v-for="n in ['clone', 'style-update', 'style-new']" :key="n" :aria-label="n"><svg><use :href="'#' + n" /></svg></button></div>
            </div>
          </div>
          <h4 class="section"><i class="arrow big"></i>Character<button aria-label="Character options"><svg><use href="#gear" /></svg></button></h4>
          <div class="rows">
            <div class="row">
              <div class="box grow field"><span class="combo"><input type="text" value="DejaVu Serif" aria-label="Font name" /><button aria-label="Fonts"><i class="arrow big"></i></button></span></div>
              <div class="box gap-size sized field"><span class="combo"><input type="text" value="12 pt" aria-label="Font size" /><button aria-label="Sizes"><i class="arrow big"></i></button></span></div>
            </div>
            <div class="row">
              <div class="box grow icons">
                <button v-for="n in ['bold', 'italic', 'underline']" :key="n" :aria-label="n"><svg><use :href="'#' + n" /></svg></button>
                <button class="narrow" aria-label="Underline styles"><i class="arrow big"></i></button>
                <button v-for="n in ['strike', 'shadow']" :key="n" :aria-label="n"><svg><use :href="'#' + n" /></svg></button>
              </div>
              <div class="box gap icons single"><button aria-label="Clear formatting"><svg><use href="#clear" /></svg></button></div>
              <div class="box gap icons"><button v-for="n in ['grow', 'shrink']" :key="n" :aria-label="n"><svg><use :href="'#' + n" /></svg></button></div>
            </div>
            <div class="row">
              <div class="box icons"><button aria-label="Font color"><svg><use href="#font-color" /></svg></button><button class="narrow" aria-label="Colors"><i class="arrow big"></i></button></div>
              <div class="box gap icons"><button aria-label="Highlight"><svg><use href="#highlight" /></svg></button><button class="narrow" aria-label="Highlights"><i class="arrow big"></i></button></div>
              <div class="box gap icons"><button aria-label="Spacing"><svg><use href="#spacing" /></svg></button><button class="narrow" aria-label="Spacings"><i class="arrow big"></i></button><button aria-label="Reset"><svg><use href="#reset" /></svg></button></div>
              <span class="fill"></span>
              <div class="box gap icons single"><button aria-label="Text wrap"><svg><use href="#text-wrap" /></svg></button></div>
              <div class="box gap icons"><button v-for="n in ['superscript', 'subscript']" :key="n" :aria-label="n"><svg><use :href="'#' + n" /></svg></button></div>
            </div>
          </div>
          <h4 class="section"><i class="arrow big"></i>Paragraph<button aria-label="Paragraph options"><svg><use href="#gear" /></svg></button></h4>
          <div class="rows">
            <div class="row">
              <div class="box icons"><button v-for="(n, i) in ['align-left', 'align-center', 'align-right', 'align-justify']" :key="n" :class="{ on: i === 0 }" :aria-label="n"><svg><use :href="'#' + n" /></svg></button></div>
              <span class="fill"></span>
              <div class="box sliver"></div>
            </div>
            <div class="row">
              <div class="box icons lists">
                <template v-for="(n, i) in ['bullets', 'numbering', 'bullets']" :key="i"><button :aria-label="n"><svg><use :href="'#' + n" /></svg></button><button class="narrow" aria-label="Options"><i class="arrow big"></i></button></template>
              </div>
              <span class="fill"></span>
              <div class="box icons fills"><button aria-label="Background"><svg><use href="#clone" /></svg></button><button class="narrow" aria-label="Backgrounds"><i class="arrow big"></i></button></div>
            </div>
            <div class="labels"><span>Spacing:</span><span>Indent:</span></div>
          </div>
        </aside>
        <nav class="tabs" aria-label="Sidebar">
          <button class="tab menu" aria-label="Sidebar settings"><svg viewBox="0 0 12 12"><path d="M1 1.500h10M1 5.500h10M1 9.500h10" stroke="#eee" stroke-width="2" /></svg></button>
          <button v-for="(n, i) in tabs" :key="n" class="tab" :class="{ on: i === 0 }" :aria-label="n"><svg><use :href="'#' + n" /></svg></button>
        </nav>
      </div>
    </section>

    <footer class="panel">
      <button class="start" aria-label="Menu"><svg class="launch"><use href="#launcher" /></svg></button>
      <button v-for="n in launchers" :key="n" class="app" :aria-label="n">
        <svg><use :href="'#' + n" /></svg>
        <svg v-if="n === 'globe'" class="cursor" viewBox="0 0 14 20"><path d="M1 1v15l4-4 3 7 3-1-3-7h5z" fill="#f4f4f4" stroke="#5b6066" /></svg>
      </button>
      <button class="app active" aria-label="LibreOffice"><svg><use href="#draw-app" /></svg><span class="badge">3</span></button>
      <button class="app" aria-label="Calc"><svg><use href="#calc-app" /></svg></button>
      <button class="app" aria-label="Base"><svg><use href="#base-app" /></svg></button>
      <span class="fill"></span>
      <button class="lang">EN</button>
      <button v-for="n in ['network', 'muted', 'power']" :key="n" class="tray" :aria-label="n"><svg><use :href="'#' + n" /></svg></button>
      <time class="clock" datetime="2025-08-22T21:30"><b>21:30</b><span>2025-08-22</span></time>
      <button class="peek" aria-label="Show desktop"><svg><use href="#show-desktop" /></svg></button>
    </footer>
  </div>
</template>

<style>
body {
  margin: 0;
  overflow: hidden;
  background: #170f20;
}
</style>

<style scoped>
.desktop {
  position: relative;
  height: 100vh;
  overflow: hidden;
  font: 13px/20px Inter, "Liberation Sans", sans-serif;
  color: #e8e9e9;
  background: radial-gradient(ellipse 1250px 1000px at 0 60px, #5c526a 0, #4c4159 20%, #3f344d 36%, #2b2039 50%, #140c1c 72%, #070309 100%);
}
.desktop * { box-sizing: border-box; }
.paints, .wallpaper { position: absolute; }
.sprite { display: none; }
.glyph {
  font-family: "Open Sans", sans-serif;
  fill: #6a6c6d;
  stroke: #17191a;
  stroke-width: 1px;
  paint-order: stroke;
}
.glyph.dark { fill: #4a4c4d; }
.glyph.slab { font-family: "DejaVu Serif", serif; }
.wallpaper { inset: 0; width: 100%; height: 100%; }
button {
  display: flex;
  align-items: center;
  justify-content: center;
  padding: 0;
  border: 0;
  background: none;
  color: inherit;
  font: inherit;
}
h2, h3, h4 { margin: 0; font-size: 13px; font-weight: 500; }
svg { flex: none; }

.shortcuts { position: absolute; top: 21px; left: 20px; width: 80px; }
.shortcut {
  display: flex;
  flex-direction: column;
  align-items: center;
  height: 105px;
  color: #f2f2f2;
  text-decoration: none;
  text-shadow: 1px 1px 2px #000;
}
.pic { display: block; }
.home { width: 48px; height: 40px; margin-bottom: 9px; }
.can { width: 32px; height: 44px; margin: -4px 0 9px; }

.window {
  position: absolute;
  bottom: 0;
  display: flex;
  flex-direction: column;
  overflow: hidden;
  border-radius: 6px 6px 0 0;
  background: #3b3e3f;
  box-shadow: 0 0 0 1px #191b1c, 0 3px 14px rgba(0, 0, 0, .5);
}
.base { left: 449px; top: 62px; width: 1165px; }
.calc { left: 290px; top: 152px; width: 489px; }
.impress { left: 140px; top: 227px; width: 778px; }
.writer { left: 17px; top: 307px; width: 1165px; }
.titlebar { display: flex; flex: none; height: 24px; padding: 0 3px 0 9px; border-top: 1px solid #484b4c; color: #b9bab9; }
.writer .titlebar { color: #fff; }
.title { flex: 1; text-align: center; line-height: 23px; }
.control { width: 22px; }
.control svg, .x { width: 10px; height: 10px; fill: none; stroke: currentColor; stroke-width: 2; }
.menubar { display: flex; flex: none; height: 24px; padding-bottom: 2px; white-space: nowrap; overflow: hidden; color: #898b8b; }
.writer .menubar { color: #dfe0e0; }
.menubar button { flex: none; padding: 0 10px 0 9px; line-height: 20px; }

.bars { flex: none; background: #353738; border-bottom: 1px solid #1d1f20; }
.toolbar { display: flex; align-items: center; height: 38px; padding-left: 4px; }
.toolbar.second { height: 39px; }
.tool { flex: none; width: 33px; height: 34px; }
.tool svg { width: 24px; height: 24px; }
.tool.on { border: 1px solid #1a1c1d; border-radius: 2px; background: #282a2b; }
.split { width: 44px; justify-content: flex-start; padding-left: 3px; }
.split .arrow { margin-left: 7px; }
.wide { width: 52px; }
.tool.wide svg { width: 30px; }
.sep { flex: none; width: 2px; height: 34px; margin: 0 3px; border-left: 1px solid #2f3132; border-right: 1px solid #3a3c3d; }
.arrow {
  flex: none;
  width: 0;
  height: 0;
  border: 4px solid transparent;
  border-bottom: 0;
  border-top-color: #f1f1f1;
}
.arrow.big { border-width: 6px; border-bottom: 0; }
.off .arrow { border-top-color: #707273; }
.overflow { width: 20px; margin-left: auto; overflow: hidden; }
.combo { display: flex; flex: none; height: 30px; border: 1px solid #232526; border-radius: 4px; background: #2b2d2e; overflow: hidden; }
.combo input {
  flex: 1;
  width: 0;
  min-width: 0;
  padding: 0 0 0 4px;
  border: 0;
  outline: 0;
  background: none;
  color: #eeefef;
  font: inherit;
}
.combo button { width: 27px; padding-left: 4px; border-left: 1px solid #242627; background: #343738; }
.style { width: 180px; margin-right: 2px; }
.combo.style input { margin-right: 3px; padding-right: 3px; border-right: 1px dashed #999b9b; }
.font { width: 198px; }
.points { width: 81px; margin-left: 8px; }

.base-body { display: flex; flex: 1; flex-direction: column; padding-top: 14px; }
.band { flex: none; height: 30px; background: #757878; border-bottom: 1px solid #2a2c2d; }
.panes { display: flex; flex: none; height: 267px; padding: 12px 0 14px 12px; border-bottom: 2px solid #272a2b; gap: 12px; }
.tasks { width: 621px; background: #343738; }
.description { flex: 1; padding-right: 12px; display: flex; flex-direction: column; color: #6a6d6e; }
.description h3 { line-height: 16px; font-weight: 600; padding-bottom: 6px; }
.description-box { flex: 1; border: 1px solid #303334; background: #353839; }
.objects { flex: 1; margin-bottom: 57px; border-bottom: 1px solid #292c2d; }

.writer-body { display: flex; flex: 1; min-height: 0; padding-right: 6px; }
.editor { display: flex; flex: 1; flex-direction: column; min-width: 0; overflow: hidden; background: #393c3d; }
.ruler { display: flex; align-items: flex-start; flex: none; height: 43px; }
.corner { flex: none; width: 7px; height: 5px; margin: 10px 5px 0 9px; border-left: 2px solid #bbb; border-bottom: 2px solid #bbb; }
.scale { flex: 1; min-width: 0; height: 24px; }
.scale text { fill: #8b8d8d; font: 9px Inter, sans-serif; }
.paper { flex: 1; margin-left: 18px; padding: 62px 0 0 62px; border-top: 2px solid #8a8c8c; border-left: 1px solid #191a1a; background: #fff; }
.margin-mark { display: block; width: 15px; height: 15px; border-right: 1px solid #b0b0b0; border-bottom: 1px solid #b0b0b0; }
.scrollbar { width: 15px; padding: 3px 4px 0 3px; background: linear-gradient(90deg, #454849, #5d6061 70%, #808383); }
.thumb { height: 264px; border: 1px solid #111213; border-radius: 5px; background: #414445; }
.sash { display: flex; width: 8px; background: linear-gradient(#3b3e3f 250px, #898b8a 250px); border-right: 2px solid #3b3e3f; align-items: flex-start; }
.sash-grip { margin-top: 282px; border: 5px solid transparent; border-right: 0; border-left-color: #343637; }

.deck { width: 373px; overflow: hidden; }
.deck-head { display: flex; height: 28px; padding-left: 4px; }
.grip { width: 2px; height: 15px; margin: 7px 17px 0 0; border-left: 2px dotted #77797a; }
.deck-head h3 { line-height: 28px; }
.deck-buttons { display: flex; width: 30px; margin-left: auto; padding-left: 2px; background: #353738; border-bottom: 1px solid #292b2c; }
.deck-buttons button { width: 11px; }
.deck-buttons .x { width: 8px; height: 8px; }
.section { display: flex; align-items: center; height: 19px; padding: 0 9px 0 3px; background: #2b2e2f; color: #fff; }
.section .arrow { margin-right: 2px; }
.section button { width: 18px; height: 19px; margin-left: auto; background: #353738; border-bottom: 1px solid #1f2122; }
.section svg { width: 11px; height: 11px; }
.rows { padding: 6px 6px 2px 7px; }
.row { display: flex; margin-bottom: 5px; }
.box { height: 34px; padding: 4px; background: #353738; border-bottom: 2px solid #292b2c; }
.box.field, .box.tall { height: 38px; }
.grow { flex: 1; }
.box.field { display: flex; align-items: flex-start; }
.box .combo { flex: 1; }
.gap { margin-left: 6px; }
.gap-wide { margin-left: 9px; }
.gap-size { margin-left: 16px; }
.sized { width: 91px; }
.icons { display: flex; align-items: center; padding: 0 3px; }
.icons button { width: 27px; height: 28px; }
.icons svg { width: 16px; height: 16px; }
.icons .narrow { width: 19px; }
.icons .on { border: 1px solid #1d1f20; border-radius: 3px; background: #2b2d2e; }
.single { padding: 0 4px; }
.fill { flex: 1; }
.sliver { width: 7px; }
.lists { width: 177px; }
.fills { width: 112px; justify-content: space-between; }
.labels { display: grid; grid-template-columns: 183px 1fr; color: #b8b9b9; }

.tabs { width: 38px; background: #353738; }
.tab { width: 38px; height: 39px; border-bottom: 1px solid #242627; }
.tab svg { width: 24px; height: 24px; }
.tab.menu { height: 34px; border: 0; background: #3b3e3f; }
.tab.menu svg { width: 12px; height: 12px; }
.tab.on { width: 30px; height: 31px; margin: 4px 4px 5px; border: 1px solid #1c1e1f; border-radius: 3px; background: #2a2c2d; }

.panel {
  position: absolute;
  inset: auto 0 0;
  display: flex;
  height: 49px;
  border-top: 1px solid rgba(10, 10, 10, .8);
  background: rgba(30, 30, 30, .8);
  color: #fff;
}
.start { width: 64px; }
.launch { width: 32px; height: 32px; }
.app { position: relative; width: 48px; }
.app svg { width: 30px; height: 30px; }
.app .cursor { position: absolute; left: 25px; top: 19px; width: 14px; height: 20px; }
.active { width: 46px; margin: 0 1px 0 9px; border-radius: 2px; background: #19324f; }
.badge {
  position: absolute;
  right: 1px;
  bottom: 2px;
  width: 12px;
  height: 12px;
  border-radius: 6px;
  background: #fff;
  color: #111;
  font: 700 10px/12px Inter, sans-serif;
}
.lang { width: 64px; }
.tray { width: 48px; }
.tray svg { width: 18px; height: 18px; }
.clock { display: flex; flex-direction: column; align-items: center; width: 84px; padding-top: 4px; }
.clock b { font: 500 16px/20px Inter, sans-serif; }
.clock span { font: 12px/16px "Noto Sans", sans-serif; }
.peek { width: 48px; margin-right: 8px; padding-top: 6px; }
.peek svg { width: 30px; height: 24px; }
</style>
